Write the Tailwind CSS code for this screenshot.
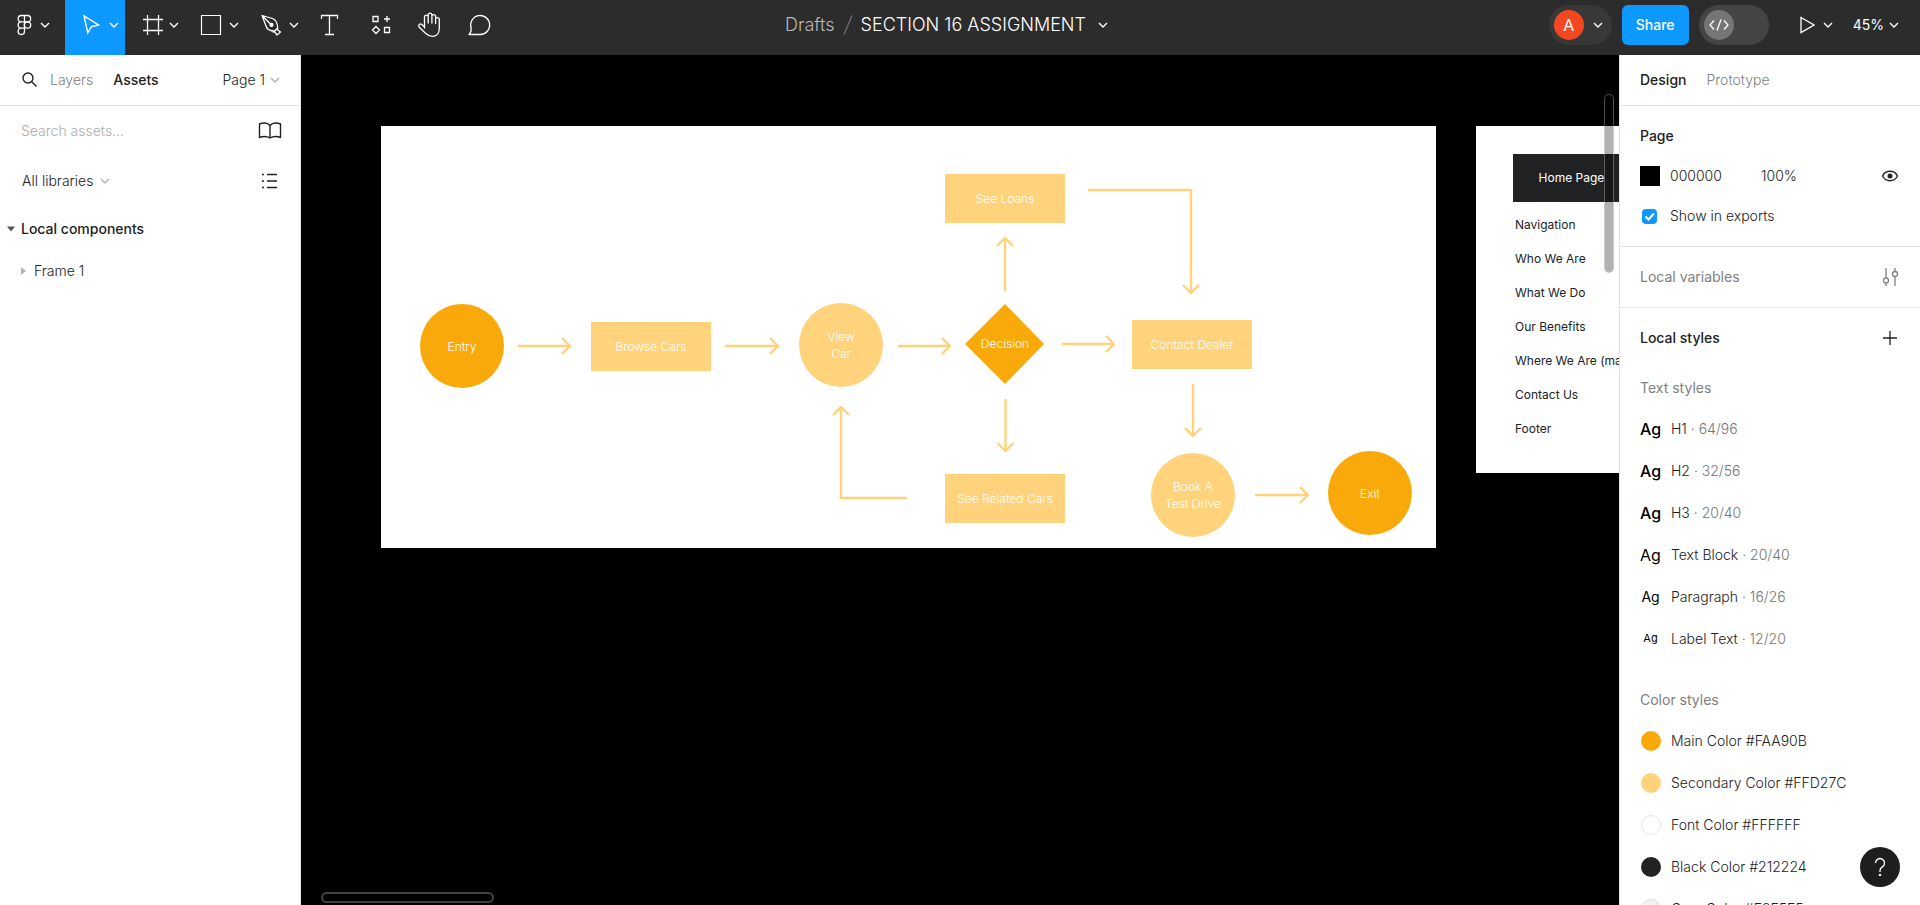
<!DOCTYPE html>
<html lang="en">
<head>
<meta charset="utf-8">
<title>SECTION 16 ASSIGNMENT</title>
<script src="https://cdn.jsdelivr.net/npm/@tailwindcss/browser@4"></script>
</head>
<body class="flex h-screen flex-col overflow-hidden bg-white font-['Inter',sans-serif] text-sm font-light text-[#222]">
<svg class="hidden">
  <symbol id="chev" viewBox="0 0 14 14"><path d="M3 5 7 9l4-4" fill="none" stroke="currentColor" stroke-width="1.400"/></symbol>
</svg>

<header class="grid h-[55px] shrink-0 grid-cols-[1fr_auto_1fr] bg-[#2c2c2c] font-normal text-white">
  <nav class="flex" aria-label="Tools">
    <button class="flex w-[65px] items-center pb-[5px] pl-2" aria-label="Main menu">
      <svg class="size-[30px]" viewBox="0 0 30 30" fill="none" stroke="#fff" stroke-width="1.300"><path d="M16.500 5.500h-3.200a3.100 3.100 0 0 0 0 6.300h3.200zM16.500 11.800h-3.200a3.100 3.100 0 0 0 0 6.300h3.200zM16.500 18.100h-3.200a3.200 3.200 0 1 0 3.200 3.200zM16.500 5.500h3a3.100 3.100 0 0 1 0 6.300h-3z"/><circle cx="19.500" cy="15" r="3.200"/></svg>
      <svg class="size-3.5"><use href="#chev"/></svg>
    </button>
    <button class="flex w-[60px] items-center bg-[#0d99ff] pb-[5px] pl-3" aria-label="Move">
      <svg class="size-[30px]" viewBox="0 0 30 30" fill="none" stroke="#fff" stroke-width="1.400"><path d="M7 5.800 21.500 15l-7 1.700-3.700 6.100z"/></svg>
      <svg class="size-3.5"><use href="#chev"/></svg>
    </button>
    <button class="flex w-[60px] items-center pb-[5px] pl-3" aria-label="Frame">
      <svg class="size-[30px]" viewBox="0 0 30 30" fill="none" stroke="#fff" stroke-width="1.300"><path d="M10.500 5v20M21.500 5v20M6 9.500h20M6 20.500h20"/></svg>
      <svg class="size-3.5"><use href="#chev"/></svg>
    </button>
    <button class="flex w-[60px] items-center pb-[5px] pl-3" aria-label="Rectangle">
      <svg class="size-[30px]" viewBox="0 0 30 30" fill="none" stroke="#fff" stroke-width="1.200"><path d="M4.500 5.500h19v19h-19z"/></svg>
      <svg class="size-3.5"><use href="#chev"/></svg>
    </button>
    <button class="flex w-[60px] items-center pb-[5px] pl-3" aria-label="Pen">
      <svg class="size-[30px]" viewBox="0 0 30 30" fill="none" stroke="#fff" stroke-width="1.300" stroke-linejoin="round"><path d="M5 5.500 15.500 8.500c3.500 1.200 5 4.500 5.200 9.500l-3 3c-4.500 0-7.700-1.500-8.700-5zM5 5.500l9 9M20.700 18l-.500 1.500 3.300 2.500-3.500 3-2.500-3.300-2 .300"/><circle cx="14.500" cy="14.900" r="1.400" fill="#fff"/></svg>
      <svg class="size-3.5"><use href="#chev"/></svg>
    </button>
    <button class="flex w-[50px] items-center justify-center pb-[5px]" aria-label="Text">
      <svg class="size-[30px]" viewBox="0 0 30 30" fill="none" stroke="#fff" stroke-width="1.300"><path d="M6.500 9V5.500h16V9M14.500 5.500v18.500M10 24.500h9"/></svg>
    </button>
    <button class="flex w-[50px] items-center justify-center pb-[5px]" aria-label="Resources">
      <svg class="size-[30px]" viewBox="0 0 30 30" fill="none" stroke="#fff" stroke-width="1.300"><path d="M8 6.500h5v5H8zM19.500 17.500h5v5h-5zM22 6v6M19 9h6M11 16.500l3.500 3.500-3.500 3.500L7.500 20z"/></svg>
    </button>
    <button class="flex w-[50px] items-center justify-center pb-[5px]" aria-label="Hand">
      <svg class="size-[30px]" viewBox="0 0 30 30" fill="none" stroke="#fff" stroke-width="1.300" stroke-linecap="round" stroke-linejoin="round"><path d="M9.500 18V6.500a1.900 1.900 0 0 1 3.700 0V13M13.200 6V4.500a1.900 1.900 0 0 1 3.700 0V13M16.900 6a1.900 1.900 0 0 1 3.700 0v7.500M20.600 9a1.900 1.900 0 0 1 3.700 0v9.500c0 5-3 7.800-7 7.800-3.500 0-5-1.300-6.800-3l-6.500-6.300a1.900 1.900 0 0 1 2.500-2.700l3 2.700"/></svg>
    </button>
    <button class="flex w-[50px] items-center justify-center pb-[5px]" aria-label="Comment">
      <svg class="size-[30px]" viewBox="0 0 30 30" fill="none" stroke="#fff" stroke-width="1.300" stroke-linejoin="round"><path d="M4 24.500c2-2 2.500-4 2-7A9.500 9.500 0 1 1 15.500 24.500z"/></svg>
    </button>
  </nav>

  <div class="flex items-center pr-[25px] pb-[5px] text-lg font-light">
    <a href="#" class="text-[#b8b8b8]">Drafts</a>
    <svg class="mx-2 h-5 w-2.5" viewBox="0 0 10 20"><path d="M1 19.500 9 .500" stroke="#6f6f6f" stroke-width="1.300"/></svg>
    <button class="flex items-center gap-2.5">SECTION 16 ASSIGNMENT <svg class="size-3.5"><use href="#chev"/></svg></button>
  </div>

  <div class="flex items-center justify-end pr-[19px] pb-[5px]">
    <button class="flex h-10 w-[63px] items-center gap-[7px] rounded-full bg-[#383838] pl-[5px]" aria-label="Account">
      <span class="flex size-[30px] items-center justify-center rounded-full bg-[#f24822] text-base">A</span>
      <svg class="size-3.5"><use href="#chev"/></svg>
    </button>
    <button class="ml-2.5 h-10 w-[67px] rounded-md bg-[#0d99ff] font-medium">Share</button>
    <button class="ml-2.5 flex h-10 w-[70px] items-center rounded-full bg-[#444] pl-[5px]" role="switch" aria-checked="false" aria-label="Dev mode">
      <svg class="size-[30px] rounded-full bg-[#757575]" viewBox="0 0 30 30" fill="none" stroke="#fff" stroke-width="1.300"><path d="M10 10.500 6 15l4 4.500M20 10.500l4 4.500-4 4.500M17 9.500l-4 11"/></svg>
    </button>
    <button class="ml-[30px] flex items-center gap-1.5" aria-label="Present">
      <svg class="h-[18px] w-4" viewBox="0 0 16 18" fill="none" stroke="#fff" stroke-width="1.300"><path d="M2 1.500 15 9 2 16.500z"/></svg>
      <svg class="size-3.5"><use href="#chev"/></svg>
    </button>
    <button class="ml-[18px] flex items-center gap-[3px]">45% <svg class="size-3.5"><use href="#chev"/></svg></button>
  </div>
</header>

<div class="flex min-h-0 flex-1">
  <aside class="w-[301px] shrink-0 border-r border-[#e5e5e5]">
    <div class="flex h-[51px] items-center border-b border-[#e5e5e5] pr-[18px] pl-[22px]">
      <button aria-label="Search"><svg class="size-4" viewBox="0 0 16 16" fill="none" stroke="#222" stroke-width="1.400"><circle cx="6" cy="6" r="5"/><path d="m9.700 9.700 4.800 4.800"/></svg></button>
      <button class="ml-3 text-[#808080]">Layers</button>
      <button class="ml-5 font-medium">Assets</button>
      <button class="ml-auto flex items-center gap-[3px]">Page 1 <svg class="size-3.5 text-[#b3b3b3]"><use href="#chev"/></svg></button>
    </div>
    <div class="flex h-[50px] items-center justify-between pr-[18px] pl-[21px]">
      <input type="text" aria-label="Search assets" placeholder="Search assets..." class="min-w-0 flex-1 outline-none placeholder:text-[#adadad]">
      <button aria-label="Libraries"><svg class="h-[18px] w-6" viewBox="0 0 24 18" fill="none" stroke="#222" stroke-width="1.400" stroke-linejoin="round"><path d="M12 3.500C10.500 1.500 9 1 6.500 1S2.500 1.500 1.500 2v13.500c1.500-.700 3-1 5-1s4 .500 5.500 1.500c1.500-1 3.500-1.500 5.500-1.500s3.500.300 5 1V2c-1-.500-2.500-1-5-1S13.500 1.500 12 3.500zv12.500"/></svg></button>
    </div>
    <div class="flex h-[50px] items-center justify-between pr-[22px] pl-[22px]">
      <button class="flex items-center gap-[5px]">All libraries <svg class="size-3.5 text-[#b3b3b3]"><use href="#chev"/></svg></button>
      <button aria-label="List view"><svg class="h-4 w-[17px]" viewBox="0 0 17 16" stroke="#222" stroke-width="1.400"><path d="M1 1.500h2M6 1.500h10M1 8h2M6 8h10M1 14.500h2M6 14.500h10"/></svg></button>
    </div>
    <button class="mt-0.5 flex h-[42px] w-full items-center gap-1.5 pl-[7px] font-medium">
      <svg class="size-2" viewBox="0 0 8 8"><path d="M0 1.500h8l-4 5z" fill="#555"/></svg>Local components
    </button>
    <button class="flex h-[42px] w-full items-center gap-1.5 pl-5">
      <svg class="size-2" viewBox="0 0 8 8"><path d="M1 0v8l5-4z" fill="#b3b3b3"/></svg>Frame 1
    </button>
  </aside>

  <main class="relative min-w-0 flex-1 overflow-hidden bg-black text-xs">
    <section class="absolute top-[71px] left-20 h-[422px] w-[1055px] bg-white leading-[17px] text-white" aria-label="User flow">
      <svg class="absolute inset-0 size-full" viewBox="0 0 1055 422" fill="none" stroke="#ffd27c" stroke-width="2.400" stroke-linejoin="round">
        <path d="M137 220h52M181 212l8 8-8 8M344 220h53M389 212l8 8-8 8M517 220h52M561 212l8 8-8 8M681 218h52M725 210l8 8-8 8M874 369h53M919 361l8 8-8 8"/>
        <path d="M624 165v-53M616 120l8-8 8 8M624.500 273v52M616.500 317l8 8 8-8M812 258v52M804 302l8 8 8-8"/>
        <path d="M707 64h103v103M802 159l8 8 8-8M526 372h-66v-91M452 289l8-8 8 8"/>
        <path d="m624 178 39 40-39 40-40-40z" fill="#faa90b" stroke="none"/>
      </svg>
      <div class="absolute top-[178px] left-[39px] flex size-[84px] items-center justify-center rounded-full bg-[#faa90b]">Entry</div>
      <div class="absolute top-[196px] left-[210px] flex h-[49px] w-[120px] items-center justify-center bg-[#ffd27c]">Browse Cars</div>
      <div class="absolute top-[177px] left-[418px] flex size-[84px] items-center justify-center rounded-full bg-[#ffd27c] text-center">View<br>Car</div>
      <div class="absolute top-[48px] left-[564px] flex h-[49px] w-[120px] items-center justify-center bg-[#ffd27c]">See Loans</div>
      <div class="absolute top-[177px] left-[584px] flex h-[80px] w-[80px] items-center justify-center">Decision</div>
      <div class="absolute top-[348px] left-[564px] flex h-[49px] w-[120px] items-center justify-center bg-[#ffd27c]">See Related Cars</div>
      <div class="absolute top-[194px] left-[751px] flex h-[49px] w-[120px] items-center justify-center bg-[#ffd27c]">Contact Dealer</div>
      <div class="absolute top-[327px] left-[770px] flex size-[84px] items-center justify-center rounded-full bg-[#ffd27c] text-center">Book A<br>Test Drive</div>
      <div class="absolute top-[325px] left-[947px] flex size-[84px] items-center justify-center rounded-full bg-[#faa90b]">Exit</div>
    </section>

    <section class="absolute top-[71px] left-[1175px] h-[347px] w-[400px] bg-white pt-7 pl-[37px] font-normal whitespace-nowrap text-[#212224]" aria-label="Site map">
      <div class="flex h-12 w-[117px] items-center justify-center bg-[#212224] text-white shadow-[20px_0_0_#212224]">Home Page</div>
      <ul class="pt-1.5 pl-0.5 leading-[34px]">
        <li>Navigation</li><li>Who We Are</li><li>What We Do</li><li>Our Benefits</li><li>Where We Are (map)</li><li>Contact Us</li><li>Footer</li>
      </ul>
    </section>

    <div class="absolute top-[39px] right-[5px] h-[179px] w-2.5 rounded-full border border-white/30 bg-black/30"></div>
    <div class="absolute bottom-0.5 left-5 h-[11px] w-[173px] rounded-full border-2 border-white/25"></div>
  </main>

  <aside class="w-[301px] shrink-0 overflow-hidden border-l border-[#e5e5e5]">
    <div class="flex h-[51px] items-center gap-5 border-b border-[#e5e5e5] px-5">
      <button class="font-medium">Design</button>
      <button class="text-[#808080]">Prototype</button>
    </div>
    <section class="border-b border-[#e5e5e5] py-2.5 pr-[21px] pl-5">
      <h2 class="flex h-10 items-center font-medium">Page</h2>
      <div class="flex h-10 items-center">
        <button class="size-5 bg-black" aria-label="Page colour"></button>
        <input type="text" aria-label="Hex" value="000000" class="ml-2.5 w-[91px] outline-none">
        <input type="text" aria-label="Opacity" value="100%" class="w-[60px] outline-none">
        <button class="ml-auto" aria-label="Toggle visibility"><svg class="h-3 w-[18px]" viewBox="0 0 18 12" fill="none" stroke="#222" stroke-width="1.400"><path d="M1.500 6C3 3 6 1.300 9 1.300S15 3 16.500 6C15 9 12 10.700 9 10.700S3 9 1.500 6z"/><circle cx="9" cy="6" r="2.500" fill="#222" stroke="none"/></svg></button>
      </div>
      <label class="flex h-10 items-center pl-0.5">
        <span class="grid"><input type="checkbox" checked class="col-start-1 row-start-1 size-[15px] appearance-none rounded-sm bg-[#0d99ff]"><svg class="pointer-events-none col-start-1 row-start-1 size-[15px]" viewBox="0 0 15 15" fill="none" stroke="#fff" stroke-width="2"><path d="m3.500 7.500 3 3 5.500-6"/></svg></span>
        <span class="ml-[13px]">Show in exports</span>
      </label>
    </section>
    <section class="flex h-[61px] items-center justify-between border-b border-[#e5e5e5] pr-[21px] pl-5">
      <h2 class="font-normal text-[#808080]">Local variables</h2>
      <button aria-label="Open variables"><svg class="h-[18px] w-4" viewBox="0 0 16 18" fill="none" stroke="#808080" stroke-width="1.300"><path d="M3 0v10M3 15v3M12 0v3.500M12 8.500V18"/><circle cx="3" cy="12.500" r="2.500"/><circle cx="12" cy="6" r="2.500"/></svg></button>
    </section>
    <section class="pt-2.5 pr-[22px] pl-5">
      <div class="flex h-10 items-center justify-between">
        <h2 class="font-medium">Local styles</h2>
        <button aria-label="Add style"><svg class="size-4" viewBox="0 0 16 16" stroke="#222" stroke-width="1.300"><path d="M8 1v14M1 8h14"/></svg></button>
      </div>
      <h3 class="mt-2.5 flex h-10 items-center font-normal text-[#808080]">Text styles</h3>
      <ul class="text-[#757575] [&>li]:flex [&>li]:h-[42px] [&>li]:items-center [&>li]:gap-2.5 [&>li]:whitespace-pre [&_b]:w-[21px] [&_b]:text-center [&_b]:text-black [&_i]:text-[#222] [&_i]:not-italic">
        <li><b class="text-base font-medium">Ag</b><span><i>H1</i> · 64/96</span></li>
        <li><b class="text-base font-medium">Ag</b><span><i>H2</i> · 32/56</span></li>
        <li><b class="text-base font-medium">Ag</b><span><i>H3</i> · 20/40</span></li>
        <li><b class="text-base font-normal">Ag</b><span><i>Text Block</i> · 20/40</span></li>
        <li><b class="text-sm font-normal">Ag</b><span><i>Paragraph</i> · 16/26</span></li>
        <li><b class="text-[11px] font-normal">Ag</b><span><i>Label Text</i> · 12/20</span></li>
      </ul>
      <h3 class="mt-5 flex h-10 items-center font-normal text-[#808080]">Color styles</h3>
      <ul class="[&>li]:flex [&>li]:h-[42px] [&>li]:items-center [&>li]:gap-2.5 [&>li]:pl-px [&_i]:size-5 [&_i]:rounded-full">
        <li><i class="bg-[#faa90b]"></i>Main Color #FAA90B</li>
        <li><i class="bg-[#ffd27c]"></i>Secondary Color #FFD27C</li>
        <li><i class="border border-[#e5e5e5] bg-white"></i>Font Color #FFFFFF</li>
        <li><i class="bg-[#212224]"></i>Black Color #212224</li>
        <li><i class="border border-[#e0e0e0] bg-[#f2f2f2]"></i>Grey Color #F2F5F5</li>
      </ul>
    </section>
  </aside>
</div>

<button class="fixed right-5 bottom-[18px] flex size-10 items-center justify-center rounded-full bg-[#1e1e1e] text-white" aria-label="Help">
  <svg class="size-6" viewBox="0 0 24 24" fill="none" stroke="#fff" stroke-width="1.300"><path d="M7.500 8a4.500 4.500 0 1 1 6.800 3.900c-1.500.900-2.300 1.700-2.300 3.600v1.500"/><circle cx="12" cy="20" r=".6" fill="#fff"/></svg>
</button>
</body>
</html>
